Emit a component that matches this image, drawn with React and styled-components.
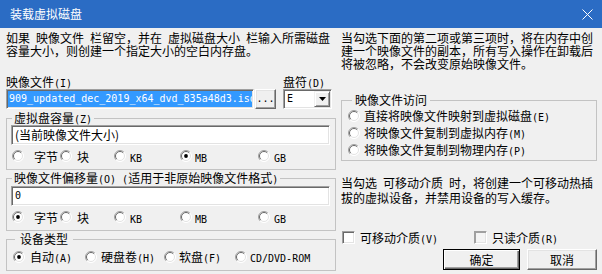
import React from "react";
import styled, { createGlobalStyle } from "styled-components";

const GlobalStyle = createGlobalStyle`
  html, body {
    margin: 0;
    padding: 0;
    background: #f0f0f0;
  }
  body {
    font-family: "Noto Sans CJK SC", "Noto Sans", sans-serif;
    font-size: 12px;
    color: #000;
  }
`;

const Window = styled.div`
  width: 602px;
  height: 274px;
  background: #f0f0f0;
  display: flex;
  flex-direction: column;
  overflow: hidden;
`;

const TitleBar = styled.div`
  height: 28px;
  flex-shrink: 0;
  background: #2b6cc4;
  color: #fff;
  display: flex;
  align-items: center;
  justify-content: space-between;
  padding: 0 9px 0 10px;
  line-height: 14px;
`;

const Body = styled.div`
  display: flex;
  gap: 5px;
  padding: 3px 5px 0 6px;
`;

const Column = styled.div`
  width: ${(p) => p.$width}px;
  display: flex;
  flex-direction: column;
`;

const Desc = styled.p`
  margin: ${(p) => p.$mt || 0}px 0 0;
  line-height: ${(p) => p.$lh || 13}px;
  white-space: nowrap;
`;

const Sp = styled.span`
  display: inline-block;
  width: 6px;
`;

const Latin = styled.span`
  font-family: "DejaVu Sans Mono", "Liberation Mono", monospace;
  font-size: 10px;
  line-height: 0;
`;

const FileRow = styled.div`
  display: grid;
  grid-template-columns: 270px 49px;
  column-gap: 7px;
  margin-top: 18px;
`;

const Field = styled.div`
  display: flex;
  flex-direction: column;
  gap: 1px;
`;

const Label = styled.div`
  line-height: 13px;
  white-space: nowrap;
`;

const InputRow = styled.div`
  display: flex;
  gap: 1px;
`;

const TextBox = styled.div`
  box-sizing: border-box;
  height: 20px;
  flex: 1;
  min-width: 0;
  background: #fff;
  border: 1px solid;
  border-color: #a0a0a0 #fff #fff #a0a0a0;
  box-shadow: inset 1px 1px 0 #696969, inset -1px -1px 0 #e3e3e3;
  padding: ${(p) => p.$pad || "2px 3px"};
  margin-top: ${(p) => p.$mt || 0}px;
  display: flex;
  align-items: center;
  justify-content: space-between;
  overflow: hidden;
  white-space: nowrap;
  line-height: 14px;
`;

const Selection = styled.span`
  flex: 1;
  align-self: stretch;
  background: #3399ff;
  color: #fff;
  overflow: hidden;
  display: flex;
  align-items: center;
  padding-left: 1px;
`;

const Raised = styled.button`
  box-sizing: border-box;
  margin: 0;
  padding: 0;
  width: ${(p) => p.$w}px;
  height: ${(p) => p.$h}px;
  background: #f0f0f0;
  font: inherit;
  color: #000;
  border: 1px solid;
  border-color: ${(p) => (p.$default ? "#000" : "#fff #696969 #696969 #fff")};
  box-shadow: ${(p) =>
    p.$default
      ? "inset 1px 1px 0 #fff, inset -1px -1px 0 #696969, inset -2px -2px 0 #a0a0a0"
      : "inset -1px -1px 0 #a0a0a0, inset 1px 1px 0 #e3e3e3"};
  display: flex;
  align-items: center;
  justify-content: center;
  line-height: 14px;
`;

const DropBtn = styled.span`
  box-sizing: border-box;
  width: 16px;
  height: 16px;
  background: #f0f0f0;
  border: 1px solid;
  border-color: #f0f0f0 #696969 #696969 #f0f0f0;
  box-shadow: inset 1px 1px 0 #fff, inset -1px -1px 0 #a0a0a0;
  display: flex;
  align-items: center;
  justify-content: center;
`;

const Group = styled.fieldset`
  margin: ${(p) => p.$mt || 0}px 0 0;
  padding: ${(p) => p.$pad || "0 5px 2px 4px"};
  border: 1px solid #c3c3c3;
  min-width: 0;
`;

const Legend = styled.legend`
  padding: 0 ${(p) => p.$px ?? 2}px;
  margin-left: ${(p) => p.$ml ?? 1}px;
  line-height: 12px;
  white-space: nowrap;
`;

const RadioGrid = styled.div`
  display: grid;
  grid-template-columns: ${(p) => p.$cols};
  height: ${(p) => p.$h || 22}px;
  align-items: center;
  padding-left: ${(p) => p.$indent || 1}px;
`;

const RadioList = styled.div`
  display: flex;
  flex-direction: column;
  padding: 1px 0 0 2px;
`;

const Option = styled.label`
  display: flex;
  align-items: center;
  gap: ${(p) => p.$gap ?? 4}px;
  height: ${(p) => p.$h || 20}px;
  white-space: nowrap;
`;

const OptionText = styled.span`
  display: block;
  line-height: 13px;
`;

const CheckRow = styled.div`
  display: grid;
  grid-template-columns: 132px auto;
  height: 14px;
  align-items: center;
  margin-top: 25px;
  padding-left: 1px;
`;

const CheckBox = styled.span`
  box-sizing: border-box;
  width: 13px;
  height: 13px;
  background: ${(p) => (p.$dim ? "#f4f4f4" : "#fff")};
  border: 1px solid;
  border-color: #a0a0a0 #fff #fff #a0a0a0;
  box-shadow: inset 1px 1px 0 ${(p) => (p.$dim ? "#a0a0a0" : "#696969")},
    inset -1px -1px 0 #e3e3e3;
`;

const ButtonRow = styled.div`
  display: flex;
  justify-content: flex-end;
  gap: 7px;
  margin-top: 5px;
`;

function Radio({ checked }) {
  return (
    <svg width="12" height="12" viewBox="0 0 12 12" style={{ flexShrink: 0 }}>
      <circle cx="6" cy="6" r="5.5" fill="#fff" />
      <path d="M2.1 9.9 A5.5 5.5 0 0 1 9.9 2.1" fill="none" stroke="#a0a0a0" />
      <path d="M2.8 9.2 A4.5 4.5 0 0 1 9.2 2.8" fill="none" stroke="#696969" />
      <path d="M9.9 2.1 A5.5 5.5 0 0 1 2.1 9.9" fill="none" stroke="#fff" />
      <path d="M9.2 2.8 A4.5 4.5 0 0 1 2.8 9.2" fill="none" stroke="#e3e3e3" />
      {checked && <circle cx="6" cy="6" r="1.9" fill="#000" />}
    </svg>
  );
}

function CloseIcon() {
  return (
    <svg width="11" height="11" viewBox="0 0 11 11">
      <path d="M0.5 0.5 L10.5 10.5 M10.5 0.5 L0.5 10.5" stroke="#fff" strokeWidth="1" />
    </svg>
  );
}

function RadioOption({ checked, gap, h, children }) {
  return (
    <Option $gap={gap} $h={h}>
      <Radio checked={checked} />
      <OptionText>{children}</OptionText>
    </Option>
  );
}

const units = [
  { key: "b", label: "字节", gap: 10 },
  { key: "k", label: "块", gap: 5 },
  { key: "kb", label: <Latin>KB</Latin>, gap: 4 },
  { key: "mb", label: <Latin>MB</Latin>, gap: 3 },
  { key: "gb", label: <Latin>GB</Latin>, gap: 4 },
];

function UnitRow({ selected }) {
  return (
    <RadioGrid $cols="48px 54px 66px 78px auto">
      {units.map((u) => (
        <RadioOption key={u.key} gap={u.gap} checked={selected === u.key}>
          {u.label}
        </RadioOption>
      ))}
    </RadioGrid>
  );
}

const devices = [
  { key: "a", label: <>自动<Latin>(A)</Latin></>, gap: 5, on: true },
  { key: "h", label: <>硬盘卷<Latin>(H)</Latin></>, gap: 4 },
  { key: "f", label: <>软盘<Latin>(F)</Latin></>, gap: 3 },
  { key: "c", label: <Latin>CD/DVD-ROM</Latin>, gap: 3 },
];

const access = [
  <>直接将映像文件映射到虚拟磁盘<Latin>(E)</Latin></>,
  <>将映像文件复制到虚拟内存<Latin>(M)</Latin></>,
  <>将映像文件复制到物理内存<Latin>(P)</Latin></>,
];

export default function App() {
  return (
    <Window>
      <GlobalStyle />
      <TitleBar>
        <span>装载虚拟磁盘</span>
        <CloseIcon />
      </TitleBar>
      <Body>
        <Column $width={330}>
          <Desc>
            如果<Sp />映像文件<Sp />栏留空，并在<Sp />虚拟磁盘大小<Sp />栏输入所需磁盘
            <br />
            容量大小，则创建一个指定大小的空白内存盘。
          </Desc>

          <FileRow>
            <Field>
              <Label>映像文件<Latin>(I)</Latin></Label>
              <InputRow>
                <TextBox $pad="1px">
                  <Selection>
                    <Latin>909_updated_dec_2019_x64_dvd_835a48d3.iso</Latin>
                  </Selection>
                </TextBox>
                <Raised $w={21} $h={20}>
                  <Latin>...</Latin>
                </Raised>
              </InputRow>
            </Field>
            <Field>
              <Label>盘符<Latin>(D)</Latin></Label>
              <TextBox $pad="1px 1px 1px 3px">
                <Latin>E</Latin>
                <DropBtn>
                  <svg width="7" height="4" viewBox="0 0 7 4">
                    <path d="M0 0 H7 L3.5 4 Z" fill="#000" />
                  </svg>
                </DropBtn>
              </TextBox>
            </Field>
          </FileRow>

          <Group $mt={3}>
            <Legend>虚拟盘容量<Latin>(Z)</Latin></Legend>
            <TextBox $mt={1}>(当前映像文件大小)</TextBox>
            <UnitRow selected="mb" />
          </Group>

          <Group $mt={2}>
            <Legend>
              映像文件偏移量<Latin>(O) (</Latin>适用于非原始映像文件格式<Latin>)</Latin>
            </Legend>
            <TextBox $mt={2}>
              <Latin>0</Latin>
            </TextBox>
            <UnitRow selected="b" />
          </Group>

          <Group $mt={2}>
            <Legend $ml={4} $px={5}>设备类型</Legend>
            <RadioGrid $cols="72px 79px 71px auto" $h={23} $indent={2}>
              {devices.map((d) => (
                <RadioOption key={d.key} gap={d.gap} checked={d.on}>
                  {d.label}
                </RadioOption>
              ))}
            </RadioGrid>
          </Group>
        </Column>

        <Column $width={256}>
          <Desc>
            当勾选下面的第二项或第三项时，将在内存中创
            <br />
            建一个映像文件的副本，所有写入操作在卸载后
            <br />
            将被忽略，不会改变原始映像文件。
          </Desc>

          <Group $mt={24} $pad="0 4px 2px 4px">
            <Legend $ml={6} $px={3}>映像文件访问</Legend>
            <RadioList>
              {access.map((a, i) => (
                <RadioOption key={i} gap={4} h={17}>
                  {a}
                </RadioOption>
              ))}
            </RadioList>
          </Group>

          <Desc $mt={14} $lh={15}>
            当勾选<Sp />可移动介质<Sp />时，将创建一个可移动热插
            <br />
            拔的虚拟设备，并禁用设备的写入缓存。
          </Desc>

          <CheckRow>
            <Option $gap={5} $h={14}>
              <CheckBox />
              <OptionText>可移动介质<Latin>(V)</Latin></OptionText>
            </Option>
            <Option $gap={5} $h={14}>
              <CheckBox $dim />
              <OptionText>只读介质<Latin>(R)</Latin></OptionText>
            </Option>
          </CheckRow>

          <ButtonRow>
            <Raised $default $w={77} $h={21}>确定</Raised>
            <Raised $w={70} $h={21}>取消</Raised>
          </ButtonRow>
        </Column>
      </Body>
    </Window>
  );
}
